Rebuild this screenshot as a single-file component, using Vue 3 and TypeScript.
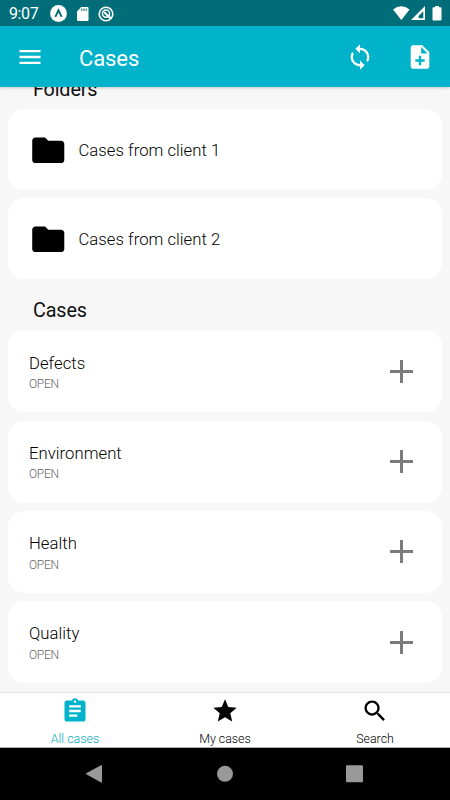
<script setup lang="ts">
interface Folder { id: number; name: string }
interface CaseItem { id: number; name: string; status: string }

const folders: Folder[] = [
  { id: 1, name: 'Cases from client 1' },
  { id: 2, name: 'Cases from client 2' },
]
const cases: CaseItem[] = [
  { id: 1, name: 'Defects', status: 'OPEN' },
  { id: 2, name: 'Environment', status: 'OPEN' },
  { id: 3, name: 'Health', status: 'OPEN' },
  { id: 4, name: 'Quality', status: 'OPEN' },
]
const tabs = [
  {
    label: 'All cases',
    active: true,
    icon: 'M19 3h-4.18C14.4 1.84 13.3 1 12 1c-1.3 0-2.4.84-2.82 2H5c-1.1 0-2 .9-2 2v14c0 1.1.9 2 2 2h14c1.1 0 2-.9 2-2V5c0-1.1-.9-2-2-2zm-7 0c.55 0 1 .45 1 1s-.45 1-1 1-1-.45-1-1 .45-1 1-1zm2 14H7v-2h7v2zm3-4H7v-2h10v2zm0-4H7V7h10v2z',
  },
  {
    label: 'My cases',
    active: false,
    icon: 'M12 17.27L18.18 21l-1.64-7.03L22 9.24l-7.19-.61L12 2 9.19 8.63 2 9.24l5.46 4.73L5.82 21z',
  },
  {
    label: 'Search',
    active: false,
    icon: 'M15.5 14h-.79l-.28-.27C15.41 12.59 16 11.11 16 9.5 16 5.91 13.09 3 9.5 3S3 5.91 3 9.5 5.91 16 9.5 16c1.61 0 3.09-.59 4.23-1.57l.27.28v.79l5 4.99L20.49 19l-4.99-5zm-6 0C7.01 14 5 11.99 5 9.5S7.01 5 9.5 5 14 7.01 14 9.5 11.99 14 9.5 14z',
  },
]
</script>

<template>
  <div class="screen">
    <div class="status">
      <span class="clock">9:07</span>
      <svg class="s-expo" width="17" height="17" viewBox="0 0 17 17">
        <circle cx="8.5" cy="8.5" r="8.4" fill="#fff" />
        <path d="M5.2 11.8C6.7 9.8 7.5 7 8.5 5.2c1 1.8 1.8 4.6 3.3 6.6" fill="none" stroke="#006d79" stroke-width="1.9" />
      </svg>
      <svg class="s-sd" width="12" height="14" viewBox="0 0 12 14">
        <path d="M4.200 0h6.300Q11.500 0 11.500 1v12q0 1-1 1h-9.500q-1 0-1-1V4.500z" fill="#fff" />
        <path d="M4.800 1.500v2.500M7 1.500v2.500M9.200 1.500v2.500" stroke="#006d79" stroke-width="1" />
      </svg>
      <svg class="s-ring" width="16" height="16" viewBox="0 0 16 16" fill="none" stroke="#fff">
        <circle cx="8" cy="8" r="6.800" stroke-width="1.600" />
        <circle cx="8" cy="7.600" r="3.600" stroke-width="1.500" />
        <path d="M6 6l6.500 6.200" stroke-width="2.200" />
      </svg>
      <span class="grow"></span>
      <svg width="42" height="15" viewBox="0 0 42 15" class="s-right" fill="#fff">
        <path d="M0 3.500Q8.300-2.800 16.600 3.500L8.300 14z" />
        <path fill-rule="evenodd" d="M32 0v14H18zM30.300 5.300L25.600 9.900v2.400h4.700z" />
      </svg>
      <svg width="10" height="15" viewBox="0 0 10 15" class="s-batt" fill="#fff">
        <path d="M3 0h4v1.300h1.500q1 0 1 1v11.200q0 1-1 1h-7q-1 0-1-1V2.300q0-1 1-1H3z" />
      </svg>
    </div>

    <header class="appbar">
      <svg class="menu" width="28" height="28" viewBox="0 0 24 24" fill="#fff">
        <path d="M3 18h18v-2H3v2zm0-5h18v-2H3v2zm0-7v2h18V6H3z" />
      </svg>
      <h1>Cases</h1>
      <svg class="sync" width="28" height="28" viewBox="0 0 24 24" fill="#fff">
        <path d="M12 4V1L8 5l4 4V6c3.310 0 6 2.690 6 6 0 1.010-.25 1.970-.7 2.800l1.460 1.460C19.540 15.030 20 13.570 20 12c0-4.420-3.580-8-8-8zm0 14c-3.310 0-6-2.690-6-6 0-1.010.25-1.970.7-2.800L5.240 7.740C4.460 8.970 4 10.430 4 12c0 4.420 3.580 8 8 8v3l4-4-4-4v3z" />
      </svg>
      <svg width="28" height="28" viewBox="0 0 24 24" fill="#fff">
        <path d="M14 2H6c-1.100 0-1.990.9-1.990 2L4 20c0 1.100.89 2 1.990 2H18c1.100 0 2-.9 2-2V8l-6-6zm2 14h-3v3h-2v-3H8v-2h3v-3h2v3h3v2zm-3-7V3.500L18.500 9H13z" />
      </svg>
    </header>

    <main class="content">
      <h2 class="first">Folders</h2>
      <section class="folders">
        <div v-for="f in folders" :key="f.id" class="card folder">
          <svg width="38.500" height="38.500" viewBox="0 0 24 24">
            <path d="M10 4H4c-1.100 0-1.990.9-1.990 2L2 18c0 1.100.9 2 2 2h16c1.100 0 2-.9 2-2V8c0-1.100-.9-2-2-2h-8l-2-2z" />
          </svg>
          <span class="name">{{ f.name }}</span>
        </div>
      </section>
      <h2 class="second">Cases</h2>
      <section class="cases">
        <div v-for="c in cases" :key="c.id" class="card case">
          <div class="text">
            <span class="name">{{ c.name }}</span>
            <span class="state">{{ c.status }}</span>
          </div>
          <svg width="23" height="23" viewBox="0 0 23 23">
            <path d="M11.500 0v23M0 11.500h23" stroke="#7b7b7b" stroke-width="3" />
          </svg>
        </div>
      </section>
    </main>

    <nav class="tabs">
      <div v-for="t in tabs" :key="t.label" class="tab" :class="{ active: t.active }">
        <svg width="28" height="28" viewBox="0 0 24 24" fill="currentColor"><path :d="t.icon" /></svg>
        <span>{{ t.label }}</span>
      </div>
    </nav>

    <div class="system">
      <svg width="450" height="52" viewBox="0 0 450 52" fill="#999">
        <path d="M86.300 25.300L101 17.200q1-.5 1 .6v16q0 1.200-1 .6L86.300 26.300q-.8-.5 0-1z" />
        <circle cx="225" cy="25.800" r="8" />
        <rect x="346" y="17.200" width="17" height="17" rx="1" />
      </svg>
    </div>
  </div>
</template>

<style>
body { margin: 0; }
</style>

<style scoped>
.screen {
  width: 450px;
  height: 800px;
  display: flex;
  flex-direction: column;
  overflow: hidden;
  background: #f7f7f7;
  font-family: Roboto, "Liberation Sans", sans-serif;
  color: #000;
}
svg { display: block; flex: none; }
.status {
  height: 26px;
  flex: none;
  box-sizing: border-box;
  display: flex;
  align-items: center;
  padding: 1px 8px 0 9px;
  background: #006d79;
  color: #fff;
}
.clock { width: 41px; font-size: 16px; line-height: 26px; letter-spacing: -0.4px; }
.s-sd { margin-left: 10px; }
.s-ring { margin-left: 8.500px; }
.grow { flex: 1; }
.s-batt { margin-left: -3px; }
.appbar {
  position: relative;
  height: 61px;
  flex: none;
  box-sizing: border-box;
  display: flex;
  align-items: center;
  padding: 0 16.500px 0 16px;
  background: #00b2ca;
  color: #fff;
  box-shadow: 0 1px 3px rgba(0, 0, 0, 0.2);
}
h1 {
  flex: 1;
  margin: 4px 0 0 35px;
  font-size: 22px;
  font-weight: 400;
  line-height: 28px;
  letter-spacing: -0.1px;
}
.sync { margin-right: 32px; }
.content { height: 605px; flex: none; overflow: hidden; }
h2 {
  margin: 0;
  padding-left: 33px;
  font-size: 19.800px;
  font-weight: 400;
  line-height: 24px;
  letter-spacing: -0.15px;
  color: #111;
}
.first { margin-top: -9px; }
.folders { display: grid; gap: 8.300px; padding: 7.200px 8px 0; }
.card {
  display: flex;
  align-items: center;
  box-sizing: border-box;
  border-radius: 16px;
  background: #fff;
}
.folder { height: 80.800px; padding-left: 21px; gap: 11px; }
.folder svg { margin-top: 1px; }
.folder .name { padding-top: 2px; }
.name { font-size: 16.700px; font-weight: 300; line-height: 22px; letter-spacing: 0.03px; }
.second { margin-top: 20px; }
.cases { display: grid; gap: 8.250px; padding: 7.400px 8px 0; }
.case { height: 82px; justify-content: space-between; padding: 0 29px 0 21px; }
.text { display: flex; flex-direction: column; gap: 0.500px; padding-top: 3px; }
.state { color: #666; font-size: 12px; font-weight: 300; line-height: 18px; letter-spacing: -0.3px; }
.tabs {
  height: 56px;
  flex: none;
  box-sizing: border-box;
  display: flex;
  border-top: 1px solid #e0e0e0;
  border-bottom: 1px solid #aaa;
  background: #fff;
}
.tab {
  flex: 1;
  display: flex;
  flex-direction: column;
  align-items: center;
  padding-top: 4px;
  font-size: 12.400px;
  font-weight: 300;
  line-height: 16px;
  gap: 6px;
}
.tab.active { color: #00a9c0; }
.tab.active svg { color: #00b2ca; }
.system { height: 52px; flex: none; background: #000; }
</style>
